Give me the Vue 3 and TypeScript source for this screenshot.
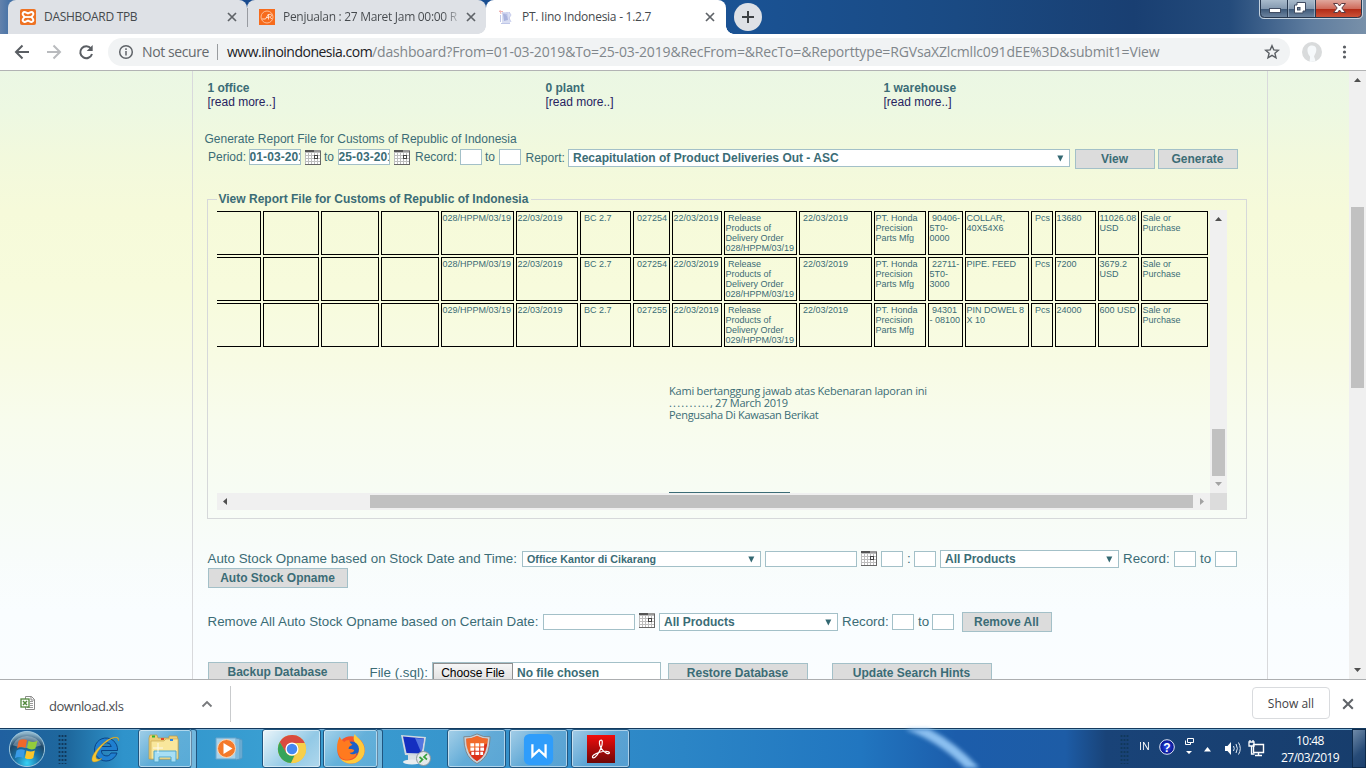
<script setup lang="ts">
interface Office { title: string }
interface ReportRow { no: string; order: string; item: string; goods: string; qty: string; price: string; reg: string }

const offices: Office[] = [{ title: '1 office' }, { title: '0 plant' }, { title: '1 warehouse' }]

const source: ReportRow[] = [
  { no: '028/HPPM/03/19', reg: '027254', order: '028/HPPM/03/19', item: '\u00a090406-\n5T0-\n0000', goods: 'COLLAR,\n40X54X6', qty: '13680', price: '11026.08\nUSD' },
  { no: '028/HPPM/03/19', reg: '027254', order: '028/HPPM/03/19', item: '\u00a022711-\n5T0-\n3000', goods: 'PIPE. FEED', qty: '7200', price: '3679.2\nUSD' },
  { no: '029/HPPM/03/19', reg: '027255', order: '029/HPPM/03/19', item: '\u00a094301\n- 08100', goods: 'PIN DOWEL 8\nX 10', qty: '24000', price: '600 USD' },
]

const cells: string[][] = source.map((r) => [
  '', '', '', '', r.no, '22/03/2019', '\u00a0BC 2.7', '\u00a0' + r.reg, '22/03/2019',
  '\u00a0Release\nProducts of\nDelivery Order\n' + r.order, '\u00a022/03/2019',
  'PT. Honda\nPrecision\nParts Mfg', r.item, r.goods, '\u00a0Pcs', r.qty, r.price, 'Sale or\nPurchase',
])
</script>

<template>
  <div class="screen">
    <svg class="defs" width="0" height="0">
      <symbol id="cal" viewBox="0 0 16 15">
        <rect width="16" height="15" fill="#bdbdbd" />
        <rect width="9" height="2" fill="#555" /><rect x="9" width="7" height="2" fill="#999" />
        <g fill="#fff">
          <template v-for="y in 4" :key="y">
            <rect v-for="x in 5" :key="x" :x="x * 3 - 2" :y="y * 3" width="2" height="2" />
          </template>
        </g>
        <rect x="9.5" y="5.5" width="3" height="3" fill="#fff" stroke="#444" />
        <path d="M15.5 1v14M0 14.5h16" stroke="#666" />
      </symbol>
      <symbol id="close" viewBox="0 0 10 10"><path d="M1 1l8 8M9 1l-8 8" stroke="#5f6368" stroke-width="1.7" /></symbol>
      <symbol id="drop" viewBox="0 0 7 7"><path d="M.3 .5h6L3.300 6.500z" fill="#336872" /></symbol>
    </svg>

    <header class="tabs">
      <div class="tab first">
        <svg class="fav" viewBox="0 0 16 16">
          <rect width="16" height="16" rx="2" fill="#ee7223" />
          <path d="M5.3 3.2C3.2 2.6 2 4.600 3 6l1.500 2L3 10c-1 1.600.400 3.400 2.300 2.800L8 11.500l2.700 1.300c1.900.600 3.300-1.200 2.300-2.800l-1.500-2L13 6c1-1.400-.200-3.400-2.300-2.800L8 4.500z" fill="none" stroke="#fff" stroke-width="2" />
          <path d="M5 8h6" stroke="#fff" stroke-width="1.800" />
        </svg>
        <span class="t1">DASHBOARD TPB</span>
        <svg class="x"><use href="#close" /></svg>
      </div>
      <div class="tab second">
        <svg class="fav" viewBox="0 0 16 16">
          <rect width="16" height="16" fill="#f76b1c" />
          <circle cx="8" cy="8" r="6" fill="none" stroke="#ffd0b0" stroke-width=".8" />
          <path d="M3 10h3.500l3-5v5.500M7 8.500h3M10 5.500c4-1 3 2.500.500 2.500l2.500 2" fill="none" stroke="#ffe2d0" stroke-width=".9" />
        </svg>
        <span class="t2">Penjualan : 27 Maret Jam 00:00 R</span>
        <svg class="x"><use href="#close" /></svg>
      </div>
      <div class="tab active">
        <svg class="fav" viewBox="0 0 16 16">
          <path d="M4 3h8v11H4z" fill="#d9def2" /><path d="M5 5h4l1 6-4 1z" fill="#a9b3dd" />
          <path d="M4 4l4 1M11 3l2 3-2 3 2 4M9 3v4" stroke="#c4caeb" fill="none" /><path d="M1 2.500h4M2 1l1 4" stroke="#eeb5b5" />
          <path d="M3 14.500h9M2.500 6v7" stroke="#bfc7e8" />
        </svg>
        <span class="t3">PT. Iino Indonesia - 1.2.7</span>
        <svg class="x"><use href="#close" /></svg>
      </div>
      <svg class="plus" viewBox="0 0 28 28"><circle cx="14" cy="14" r="14" fill="#dee1e6" /><path d="M14 8v12M8 14h12" stroke="#3c4043" stroke-width="2" /></svg>
      <svg class="winbtns" viewBox="0 0 105 20">
        <defs>
          <linearGradient id="wb" x2="0" y2="1"><stop offset="0" stop-color="#a9bbcc" /><stop offset=".48" stop-color="#8499b0" /><stop offset=".5" stop-color="#3d5878" /><stop offset="1" stop-color="#7289a4" /></linearGradient>
          <linearGradient id="wr" x2="0" y2="1"><stop offset="0" stop-color="#e0a79c" /><stop offset=".48" stop-color="#cf6b5b" /><stop offset=".5" stop-color="#b02a16" /><stop offset="1" stop-color="#d0573c" /></linearGradient>
        </defs>
        <path d="M1 0h102v14q0 4-4 4H5q-4 0-4-4z" fill="url(#wb)" />
        <path d="M56 0h47v14q0 4-4 4H56z" fill="url(#wr)" />
        <path d="M.500 0v14q0 4.500 4.500 4.500h94q4.500 0 4.500-4.500V0M29 0v18M56 0v18" fill="none" stroke="#c4d2df" />
        <path d="M1.500 0v13.500q0 4 4 4h93q4 0 4-4V0M28.500 0v18M56.500 0v18" fill="none" stroke="#27384f" />
        <rect x="10.500" y="8.500" width="11" height="4" fill="#fff" stroke="#414d63" />
        <path d="M38 2.500h8.500v8.500H44V13h-8.500V5H38z" fill="#fff" stroke="#414d63" /><rect x="38.500" y="7.500" width="2.500" height="2.500" fill="#71839a" stroke="#414d63" />
        <path d="M74.500 3.500h4l2 2.500 2-2.500h4l-3.700 4.500 3.700 4.500h-4l-2-2.500-2 2.500h-4l3.700-4.500z" fill="#fff" stroke="#5c3b42" />
      </svg>
    </header>

    <div class="toolbar">
      <svg class="nav" viewBox="0 0 108 36">
        <path d="M29 18H16M22.500 11.500L16 18l6.500 6.500" fill="none" stroke="#5a5e63" stroke-width="2" />
        <path d="M47 18h13M53.500 11.500L60 18l-6.500 6.500" fill="none" stroke="#b9bbbe" stroke-width="2" />
        <path d="M91 14.500A6 6 0 1 0 92 20" fill="none" stroke="#5a5e63" stroke-width="2" /><path d="M92.700 11v6h-6z" fill="#5a5e63" />
      </svg>
      <div class="omnibox">
        <svg class="info" viewBox="0 0 16 16"><circle cx="8" cy="8" r="6.300" fill="none" stroke="#5f6368" stroke-width="1.500" /><path d="M8 7v4.500M8 4.300v1.600" stroke="#5f6368" stroke-width="1.500" /></svg>
        <span class="notsec">Not secure</span>
        <i class="bar"></i>
        <span class="host">www.iinoindonesia.com</span><span class="path">/dashboard?From=01-03-2019&amp;To=25-03-2019&amp;RecFrom=&amp;RecTo=&amp;Reporttype=RGVsaXZlcmllc091dEE%3D&amp;submit1=View</span>
        <svg class="star" viewBox="0 0 16 16"><path d="M8 1.700l1.800 4.200 4.600.400-3.500 3 1.100 4.500L8 11.400l-4 2.400 1.100-4.500-3.500-3 4.600-.400z" fill="none" stroke="#5a5e63" stroke-width="1.400" /></svg>
      </div>
      <svg class="tools" viewBox="0 0 76 36">
        <circle cx="22" cy="18" r="10" fill="#d9dbdc" /><path d="M22 11.500c4 0 5 3 4 6.500-.600 2-1.600 3-2 4.500.400 2 2 3 1 5l-5 .400c-1-2 .500-3 0-5.400-1-1.500-2-2.500-2.400-5C17 14 18.500 11.500 22 11.500z" fill="#f6f9fb" />
        <g fill="#5a5e63"><circle cx="54.500" cy="13" r="1.600" /><circle cx="54.500" cy="18" r="1.600" /><circle cx="54.500" cy="23" r="1.600" /></g>
      </svg>
    </div>

    <main class="viewport">
      <div class="page">
        <section class="panel">
          <div class="offices">
            <div v-for="o in offices" :key="o.title"><b>{{ o.title }}</b><a>[read more..]</a></div>
          </div>
          <div class="caption">Generate Report File for Customs of Republic of Indonesia</div>
          <div class="filters">
            <span>Period:</span><span class="field">01-03-2019</span><svg class="cal"><use href="#cal" /></svg>
            <span>to</span><span class="field">25-03-2019</span><svg class="cal"><use href="#cal" /></svg>
            <span>Record:</span><span class="field"></span><span>to</span><span class="field"></span>
            <span class="low">Report:</span>
            <span class="select">Recapitulation of Product Deliveries Out - ASC<svg><use href="#drop" /></svg></span>
            <span class="btn view">View</span><span class="btn">Generate</span>
          </div>

          <fieldset class="report">
            <legend>View Report File for Customs of Republic of Indonesia</legend>
            <div class="scroller">
              <div class="sheet">
                <div v-for="(row, i) in cells" :key="i" class="row">
                  <div v-for="(c, j) in row" :key="j" class="cell">{{ c }}</div>
                </div>
                <div class="sign">
                  <p class="s1">Kami bertanggung jawab atas Kebenaran laporan ini</p>
                  <p class="s2"><span>..........</span>, 27 March 2019</p>
                  <p class="s3">Pengusaha Di Kawasan Berikat</p>
                  <div class="rule"></div>
                </div>
              </div>
              <div class="vbar">
                <svg viewBox="0 0 7 4"><path d="M0 4h7L3.500 0z" fill="#505050" /></svg>
                <i></i>
                <svg viewBox="0 0 7 4"><path d="M0 0h7L3.500 4z" fill="#a3a3a3" /></svg>
              </div>
              <div class="hbar">
                <svg viewBox="0 0 4 7"><path d="M4 0v7L0 3.500z" fill="#505050" /></svg>
                <i></i>
                <svg viewBox="0 0 4 7"><path d="M0 0v7l4-3.500z" fill="#a3a3a3" /></svg>
              </div>
              <div class="corner"></div>
            </div>
          </fieldset>

          <div class="stock">
            <span>Auto Stock Opname based on Stock Date and Time:</span>
            <span class="select small">Office Kantor di Cikarang<svg><use href="#drop" /></svg></span>
            <span class="field"></span><svg class="cal"><use href="#cal" /></svg><span class="field"></span><span>:</span><span class="field"></span>
            <span class="select">All Products<svg><use href="#drop" /></svg></span>
            <span>Record:</span><span class="field"></span><span>to</span><span class="field"></span>
          </div>
          <span class="btn wide">Auto Stock Opname</span>

          <div class="remove">
            <span>Remove All Auto Stock Opname based on Certain Date:</span>
            <span class="field"></span><svg class="cal"><use href="#cal" /></svg>
            <span class="select">All Products<svg><use href="#drop" /></svg></span>
            <span>Record:</span><span class="field"></span><span>to</span><span class="field"></span>
            <span class="btn">Remove All</span>
          </div>

          <div class="backup">
            <span class="btn b1">Backup Database</span>
            <span class="filelabel">File (.sql):</span>
            <span class="file"><span class="choose">Choose File</span><b>No file chosen</b></span>
            <span class="btn b2">Restore Database</span>
            <span class="btn b3">Update Search Hints</span>
          </div>
        </section>
      </div>
      <div class="pagebar">
        <svg viewBox="0 0 7 4"><path d="M0 4h7L3.500 0z" fill="#505050" /></svg>
        <i></i>
        <svg viewBox="0 0 7 4"><path d="M0 0h7L3.500 4z" fill="#505050" /></svg>
      </div>
    </main>

    <div class="downloads">
      <svg class="xls" viewBox="0 0 16 16">
        <path d="M5.500 1.500h6l3 3v10h-9z" fill="#fff" stroke="#8a8a8a" /><path d="M11 1.500v3.500h3.500" fill="none" stroke="#8a8a8a" />
        <path d="M10 6.500h3M10 8.500h3M10 10.500h3M7 12.500h6" stroke="#9a9a9a" />
        <rect x="1" y="4" width="8" height="8" fill="#fff" stroke="#52883d" stroke-width="1.300" /><path d="M3 6l4 4M7 6l-4 4" stroke="#52883d" stroke-width="1.500" />
      </svg>
      <span class="fname">download.xls</span>
      <svg class="chev" viewBox="0 0 12 8"><path d="M1.500 6.500L6 2l4.500 4.500" fill="none" stroke="#77797c" stroke-width="1.800" /></svg>
      <i class="sep"></i>
      <span class="showall">Show all</span>
      <svg class="x2"><use href="#close" /></svg>
    </div>

    <footer class="taskbar">
      <svg class="streak" viewBox="0 0 200 40" preserveAspectRatio="none"><path d="M48 -4Q86 10 116 44" fill="none" stroke="#8cc0f0" stroke-width="10" /></svg>
      <svg class="orb" viewBox="0 0 40 40">
        <defs><radialGradient id="orbg" cx=".5" cy=".9" r=".85"><stop offset="0" stop-color="#37d2f5" /><stop offset=".4" stop-color="#1b74a8" /><stop offset=".75" stop-color="#1d4768" /><stop offset="1" stop-color="#8fb4c9" /></radialGradient></defs>
        <circle cx="20" cy="20" r="18.500" fill="url(#orbg)" stroke="#a3cbe0" stroke-width="1" />
        <path d="M5 16A16 15 0 0 1 35 16Q20 22 5 16z" fill="#fff" opacity=".3" />
        <g transform="translate(-2 -2) scale(1.100)">
          <path d="M12 12q4-2.500 8-.500l-1.500 7.500q-4-2-8 .500z" fill="#f0682a" /><path d="M21.500 12q4 2.500 8.500 0l-2 7.500q-4 2-8-.500z" fill="#93cc3b" />
          <path d="M10 21.500q4-2.300 8-.300l-1.600 7.300q-4-2-8 .300z" fill="#3a9be6" /><path d="M19.500 21.500q4 2 8 0L26 28.500q-4 2.300-8 0z" fill="#fbc62a" />
        </g>
      </svg>
      <i class="grip"></i>
      <svg class="ie" viewBox="0 0 34 34">
        <path d="M28.500 18.500H12.500a5 5 0 0 0 9.500 2.500h6a11.500 11.500 0 1 1 .5-2.500zM12.600 14.500h9.700a5 5 0 0 0-9.700 0z" fill="#1f7fd0" stroke="#0a4486" stroke-width="1" />
        <path d="M29.500 9c2-6-7-5-14.500 1.500C5.500 18-.5 29 5 30c3 0 5.500-1.500 8-3.500-4 1.500-6.500 1-6-2.500C8 19 15 11.500 20 8.300c5-3.200 9-4 9.500.700z" fill="#f4c533" stroke="#bb8d1e" stroke-width=".4" />
      </svg>
      <div class="task explorer stacked">
        <svg viewBox="0 0 36 34">
          <path d="M2 6l1-3h7l1 3h11V4h8l1 3v20H2z" fill="#edcf78" stroke="#b99a45" stroke-width=".7" /><path d="M4 9h13l2-2h12v20H4z" fill="#f9e79c" stroke="#c9aa55" stroke-width=".7" />
          <rect x="5" y="3.500" width="3" height="2" fill="#2db52d" /><rect x="14" y="6" width="3" height="2" fill="#e44529" /><rect x="23" y="7" width="3" height="2" fill="#2f88e8" />
          <path d="M7 19h22v11h-5v-5H12v5H7z" fill="#a7dff5" stroke="#4fa5cc" />
          <path d="M11 11v10M6 16h10" stroke="#fff" opacity=".8" />
        </svg>
      </div>
      <svg class="media" viewBox="0 0 34 34">
        <path d="M4 6h20v21H4z" fill="#a7d3ec" stroke="#6ba6cc" /><path d="M24 6l4 1v20l-4 1M28 7l2 1v18l-2 1" fill="#7cb9dd" stroke="#5799c2" />
        <circle cx="14.500" cy="16.500" r="9" fill="#f4792a" stroke="#fbd6b5" /><path d="M11.500 11v11l9-5.500z" fill="#fff" />
      </svg>
      <div class="task chrome">
        <svg viewBox="0 0 34 34">
          <circle cx="17" cy="17" r="15" fill="#eac044" /><path d="M4 9.500A15 15 0 0 1 30.500 10.500H17L10 20.500z" fill="#d94b3f" /><path d="M4 9.500L10.500 20.500A7.300 7.300 0 0 0 19.500 24L16 32A15 15 0 0 1 4 9.500z" fill="#35a45a" />
          <path d="M30.500 10.500A15 15 0 0 1 16 32l7.500-12.500a7 7 0 0 0-2-9z" fill="#f7cf4a" /><circle cx="17" cy="17" r="7" fill="#fff" /><circle cx="17" cy="17" r="5.600" fill="#4688f1" />
        </svg>
      </div>
      <div class="task firefox stacked">
        <svg viewBox="0 0 34 34">
          <circle cx="17" cy="18" r="14.500" fill="#f2542d" /><path d="M21 1c2 4 11 8 10.500 18A14.500 14.500 0 0 1 17 32.500c-5 0-9-2-12-6 5 4 13 3.500 17-.5 5-5 3-10 1-13-1.500-3-5-6-2-12z" fill="#ffc93c" />
          <circle cx="17.500" cy="17" r="8" fill="#1c5fc7" /><path d="M5 4c-3 6-3.500 11-2 16C5 29 13 30 18 27c3-1 5-4 5-6-3 2.500-6 2-7.500 0 3 .500 4.500-1.500 5-3-2-1-4-1-6-1 0-3 2-3 4-4.500-2-1.500-3-2.500-3.500-5-3 0-4 1-5 2C8 8 6 7 5 4z" fill="#ff7a1f" />
        </svg>
      </div>
      <svg class="rdp" viewBox="0 0 36 36">
        <path d="M11 24l9-1 2 7-11 2z" fill="#d9e0e5" /><ellipse cx="15" cy="31" rx="9" ry="2.500" fill="#e9edf0" />
        <path d="M4 4l25 2-3 19L8 24z" fill="#cfd8e0" /><path d="M6 5.500l21 2-2.500 15L9.500 22z" fill="#142fc0" /><path d="M18 7l9 1-2.500 14z" fill="#6d94ee" opacity=".7" />
        <circle cx="26.500" cy="27.500" r="7" fill="#e4e9eb" stroke="#8e979c" /><path d="M22.500 26l3 2.500-3 3M30 23l-3 3 3 2.500" fill="none" stroke="#36a23b" stroke-width="1.700" />
      </svg>
      <div class="task shield">
        <svg viewBox="0 0 34 34">
          <path d="M3 4q7 1 14-3 7 4 14 3-.500 10-2.500 16-3 8-11.500 12.500Q8.500 28 5.500 20 3 14 3 4z" fill="#c9cfd4" stroke="#7c858b" /><path d="M5.500 6q6 0 11.500-2.700Q22.500 6 28.500 6 28 14 26 19.500 24 26 17 30 10 26 8 19.500 5.500 14 5.500 6z" fill="#dc3219" />
          <path d="M5.500 6q6 0 11.500-2.700Q22.500 6 28.500 6l-.500 5-20 10Q5.600 14 5.500 6z" fill="#ff8f35" opacity=".6" />
          <g fill="#fff"><path d="M10 11h4v3.300h-4zM15.300 11h4v3.300h-4zM20.500 11h4v3.300h-4zM10 15.500h4v3.300h-4zM15.300 15.500h4v3.300h-4zM20.500 15.500h4v3.300h-4zM11 20h3v3.300h-3zM15.300 20h4v3.300h-4zM20.500 20h3v3.300h-3z" /></g>
        </svg>
      </div>
      <div class="task wps">
        <svg viewBox="0 0 34 34"><rect x="1" y="1" width="31" height="33" rx="6" fill="#2f9dfb" /><path d="M10 12v12.500l7-6.500 7 6.500V12" fill="none" stroke="#fff" stroke-width="2.400" /></svg>
      </div>
      <div class="task acro">
        <svg viewBox="0 0 30 30">
          <defs><linearGradient id="ag" x2="0" y2="1"><stop offset="0" stop-color="#f10c0c" /><stop offset="1" stop-color="#6d0707" /></linearGradient></defs>
          <rect width="30" height="30" fill="url(#ag)" /><path d="M14 6c3-2 3 3 1 8-2 5-6 11-8.500 10.500-2.500-1.500 2-4.500 7-6 5-1.500 10-1.500 10.500.500.200 2.500-6 .200-9-5-1.700-3-2.300-7-1-8z" fill="none" stroke="#fff" stroke-width="1.300" />
        </svg>
      </div>
      <div class="tray">
        <i class="grip"></i>
        <span class="lang">IN</span>
        <svg class="icons" viewBox="0 0 110 40">
          <defs><radialGradient id="hg"><stop offset="0" stop-color="#2b4df0" /><stop offset="1" stop-color="#050f8a" /></radialGradient></defs>
          <circle cx="9" cy="18" r="7.300" fill="url(#hg)" stroke="#dfe6f5" />
          <text x="9" y="22.500" text-anchor="middle" class="q">?</text>
          <path d="M29.500 9.500h6v4h-6zM27.500 11.500v4h5v-2" fill="none" stroke="#fff" /><path d="M28 22h6l-3 3zM46 22.500h7L49.500 18z" fill="#fff" />
          <path d="M67 17h2.500l3.500-4v13l-3.500-4H67z" fill="#fff" /><path d="M75.500 17q1.500 2.500 0 5M78 15q2.700 4.500 0 9M80.500 13.500q3.500 6 0 12" fill="none" stroke="#e4edf7" />
          <path d="M95.500 15.500h10v8h-10zM97 26.500h7M100.500 23.500v3" fill="#233f66" stroke="#fff" stroke-width="1.400" /><path d="M91 13h5v4h-5zM93.500 17v8h3M92 11v2M95 11v2" fill="none" stroke="#fff" stroke-width="1.300" />
        </svg>
        <div class="clock"><span>10:48</span><span>27/03/2019</span></div>
        <i class="desk"></i>
      </div>
    </footer>
  </div>
</template>

<style>
body { margin: 0; overflow: hidden; }
</style>

<style scoped>
* { box-sizing: border-box; }
.screen { width: 1366px; height: 768px; overflow: hidden; display: flex; flex-direction: column; font-family: "Liberation Sans", Arial, sans-serif; font-size: 12px; color: #3b6c76; background: #fff; }
.defs { position: absolute; }
svg { display: block; flex: none; }
i { display: block; flex: none; }

.tabs { height: 34px; flex: none; display: flex; padding-left: 8px; background: linear-gradient(90deg, #6382ac 0, #4672a6 10px, #18498d 200px, #1a5293 55%, #1a4a83 70%, #193f72 83%, #244b7b 90%, #5f7d9f 96%, #7890a9 100%); font-family: "Open Sans", "Noto Sans", sans-serif; color: #45494d; }
.tab { position: relative; height: 34px; display: flex; align-items: center; background: #dee1e6; border-radius: 8px 8px 0 0; padding-left: 12px; white-space: nowrap; }
.first { width: 239px; }
.second { width: 239px; }
.first::after { content: ""; position: absolute; right: -1px; top: 8px; width: 1px; height: 19px; background: #989ba1; z-index: 1; }
.active { width: 240px; background: #fff; }
.active::before, .active::after { content: ""; position: absolute; bottom: 0; width: 8px; height: 8px; }
.active::before { left: -8px; background: radial-gradient(circle at 0 0, #dee1e6 7.5px, #fff 8px); }
.active::after { right: -8px; background: radial-gradient(circle at 100% 0, transparent 7.5px, #fff 8px); }
.fav { width: 16px; height: 16px; margin-right: 8px; }
.tab span { flex: 1; height: 18px; line-height: 18px; overflow: hidden; }
.t1 { letter-spacing: -0.3px; }
.t2 { letter-spacing: -0.3px; background: linear-gradient(90deg, #45494d 160px, #dee1e6 180px); background-clip: text; color: transparent; }
.t3 { letter-spacing: -0.26px; }
.x { width: 10px; height: 10px; margin-right: 10px; margin-left: 6px; }
.active .x { margin-right: 11px; }
.plus { width: 28px; height: 28px; margin: 3px 0 0 8px; }
.winbtns { width: 105px; height: 20px; margin-left: auto; margin-right: 2px; }

.toolbar { height: 37px; flex: none; display: flex; background: #fff; border-bottom: 1px solid #b2b3b4; font-family: "Open Sans", "Noto Sans", sans-serif; font-size: 14px; }
.nav { width: 108px; height: 36px; }
.omnibox { width: 1182px; height: 28px; margin-top: 4px; border-radius: 14px; background: #f1f3f4; display: flex; align-items: center; padding-left: 10px; white-space: nowrap; line-height: 28px; }
.info { width: 16px; height: 16px; }
.notsec { width: 67px; margin-left: 8px; color: #65696d; letter-spacing: -0.4px; }
.bar { width: 1px; height: 16px; margin: 0 9px 0 8px; background: #999c9f; }
.host { width: 145px; color: #202124; letter-spacing: -0.5px; }
.path { width: 788px; color: #80868b; letter-spacing: -0.155px; }
.star { width: 16px; height: 16px; margin-left: auto; margin-right: 10px; }
.tools { width: 76px; height: 36px; }

.viewport { height: 608px; flex: none; display: flex; overflow: hidden; }
.page { width: 1349px; background: linear-gradient(180deg, #ebf7e4 0, #edf8e2 40px, #f2f9dd 85px, #f6fada 140px, #f7fbdc 215px, #f8fbe4 290px, #f8fced 350px, #f7fcf4 420px, #f8fcfa 480px, #f9fdff 540px, #fafdff 608px); }
.panel { width: 1076px; height: 608px; margin-left: 192px; border: solid #d8d9dc; border-width: 0 1px; overflow: hidden; padding: 10px 0 0 15px; }
.offices { display: grid; grid-template-columns: repeat(3, 338px); line-height: 14px; margin-left: -0.5px; }
.offices b, .offices a { display: block; }
.offices a { color: #272361; }
.caption { margin: 23px 0 0 -3.5px; line-height: 14px; height: 17px; }
.filters, .stock, .remove { display: grid; align-items: start; white-space: nowrap; line-height: 16px; }
.filters { height: 20px; grid-template-columns: 41px 56px 19px 14px 56px 21px 45px 25px 14px 27px 42px 507px 83px 80px; }
.field { height: 16px; border: 1px solid #a3c0c8; background: #fff; font-weight: bold; line-height: 14px; overflow: hidden; }
.filters .field { width: 52px; text-indent: -0.5px; letter-spacing: 0.1px; }
.filters .field:empty { width: 22px; }
.cal { width: 16px; height: 15px; margin-top: 1px; }
.low { line-height: 18px; text-indent: -0.5px; }
.select { position: relative; height: 18px; border: 1px solid #a3c0c8; background: #fff; font-size: 12px; font-weight: bold; line-height: 17px; padding-left: 4px; }
.select svg { position: absolute; right: 5px; top: 5px; width: 7px; height: 7px; }
.filters .select { width: 502px; }
.btn { height: 20px; border: 1px solid #a3c0c8; background: #dcdcdc; font-size: 12px; font-weight: bold; line-height: 18px; text-align: center; display: block; white-space: nowrap; padding-right: 1px; }
.view { width: 80px; }

.report { position: relative; margin: 22px 0 0 -1px; padding: 0; width: 1040px; height: 328px; border: 1px solid #d6d8da; min-width: 0; font-size: 12px; }
.report legend { margin-left: 9px; padding: 0 2.5px 0 1.5px; height: 16px; line-height: 16px; font-weight: bold; }
.scroller { margin: 3px 0 0 9px; width: 1010px; height: 300px; display: grid; grid-template: 283px 17px / 993px 17px; }
.sheet { overflow: hidden; padding-top: 1px; }
.row { display: grid; gap: 2px; margin-bottom: 2px; height: 44px; grid-template-columns: 44px 56px 58px 58px 73px 62px 51px 37px 50px 73px 73px 52px 35px 64px 22px 41px 41px 67px; }
.cell { border: 1px solid #000; padding: 1px 0 0 0.4px; font-size: 9px; line-height: 10px; white-space: pre; overflow: hidden; }
.cell:first-child { border-left: 0; }
.sign { margin: 38px 0 0 452px; font-family: "Open Sans", "Noto Sans", sans-serif; font-size: 11px; line-height: 12px; }
.sign p { margin: 0; white-space: nowrap; }
.s1 { letter-spacing: -0.21px; }
.s2 { letter-spacing: -0.25px; }
.s2 span { letter-spacing: 1.2px; }
.s3 { letter-spacing: -0.3px; }
.rule { width: 121px; height: 1px; margin-top: 71px; background: #3b6c76; }
.vbar, .pagebar { width: 17px; background: #f0f0f0; display: flex; flex-direction: column; align-items: center; padding: 7px 0; }
.vbar svg, .pagebar svg { width: 7px; height: 4px; }
.vbar i { width: 13px; height: 47px; margin: auto 0 6px; background: #c1c1c1; }
.hbar { height: 17px; background: #f0f0f0; display: flex; align-items: center; padding: 0 6px; }
.hbar svg { width: 4px; height: 7px; }
.hbar i { width: 823px; height: 13px; margin: 0 7px 0 auto; background: #c1c1c1; }
.corner { background: #dcdcdc; }

.stock { margin-top: 31px; height: 18px; font-size: 13.333px; line-height: 16px; grid-template-columns: 314px 243px 96px 20px 26px 7px 26px 183px 51px 26px 15px 22px; }
.stock > span:first-child, .remove > span:first-child { text-indent: -0.5px; letter-spacing: 0.01px; }
.stock > *, .remove > * { margin-top: 1px; }
.stock .select, .remove .select { margin-top: 0; width: 179px; }
.stock .select.small { margin-top: 1px; width: 239px; height: 16px; line-height: 15px; font-size: 10.667px; letter-spacing: 0.02px; }
.small svg { top: 4px; }
.field:nth-child(3), .remove .field:nth-child(2) { width: 92px; }
.stock .field:nth-child(n+4), .remove .field:nth-child(n+4) { width: 22px; }
.wide { width: 140px; }
.remove { margin-top: 24px; height: 20px; font-size: 13.333px; line-height: 18px; grid-template-columns: 335px 96px 20px 183px 50px 26px 14px 30px 90px; }
.remove .field { margin-top: 2px; }
.remove .select { margin-top: 1px; }
.remove .btn { margin-top: 0; }
.backup { margin-top: 30px; display: flex; align-items: flex-start; white-space: nowrap; }
.b1 { width: 140px; }
.filelabel { width: 62.5px; margin-left: 21.5px; font-size: 13.333px; line-height: 21px; }
.file { width: 229px; height: 22px; border: 1px solid #a3c0c8; background: #fff; display: flex; line-height: 20px; margin-right: 7px; }
.choose { width: 80px; height: 20px; border: 1px solid #8f8f8f; background: linear-gradient(#f6f6f6, #dedede); color: #000; text-align: center; margin-right: 4px; line-height: 19px; letter-spacing: -0.05px; }
.b2 { width: 140px; margin-top: 1px; }
.b3 { width: 160px; margin: 1px 0 0 24px; }
.pagebar i { width: 13px; height: 181px; margin: 125px 0 auto; background: #c1c1c1; }

.downloads { height: 49px; flex: none; border-top: 1px solid #acaeb0; background: #fff; display: flex; align-items: flex-start; font-family: "Open Sans", "Noto Sans", sans-serif; white-space: nowrap; }
.xls { width: 16px; height: 16px; margin: 15px 0 0 20px; }
.fname { width: 153px; margin: 16px 0 0 13px; font-size: 13px; line-height: 20px; letter-spacing: -0.45px; color: #4a4d51; }
.chev { width: 12px; height: 8px; margin-top: 20px; margin-left: -1px; }
.sep { width: 1px; height: 36px; margin: 6px 0 0 17px; background: #c9cbcd; }
.showall { width: 78px; height: 32px; margin: 7px 0 0 auto; border: 1px solid #d9dbde; border-radius: 4px; text-align: center; line-height: 31px; font-size: 12px; color: #3f4246; font-weight: 500; }
.x2 { width: 12px; height: 12px; margin: 18px 12px 0; }

.taskbar { position: relative; height: 40px; flex: none; display: flex; align-items: center; background: linear-gradient(90deg, #2060a0 0, #1e689d 5%, #2f93cb 9%, #3a9fd2 20%, #3794cc 35%, #2b85c6 50%, #2176c0 63%, #1c5dab 70%, #1d5ca6 78%, #194378 81%, #173d6c 100%); border-top: 1px solid #143a5e; box-shadow: inset 0 1px #79afd5; }
.streak { position: absolute; left: 860px; top: 0; width: 200px; height: 39px; filter: blur(2px); }
.orb { width: 38px; height: 38px; margin-left: 8px; }
.grip { width: 9px; height: 30px; margin: 0 22px 0 12px; background: radial-gradient(circle, #10385c 1px, transparent 1.2px) 0 0 / 3px 4px; }
.ie { width: 34px; height: 34px; margin-right: 15px; }
.task { position: relative; height: 39px; display: flex; align-items: center; justify-content: center; border: 1px solid #20557f; border-radius: 3px; background: linear-gradient(135deg, rgba(255,255,255,.55), rgba(255,255,255,.22) 50%, rgba(255,255,255,.18)); box-shadow: inset 0 0 0 1px rgba(255,255,255,.5); }
.task svg { width: 32px; height: 32px; }
.stacked::after { content: ""; position: absolute; right: -6px; top: -1px; width: 5px; height: 39px; border: solid #20557f; border-width: 1px 1px 1px 0; border-radius: 0 3px 3px 0; background: rgba(255,255,255,.3); }
.explorer { width: 54px; }
.explorer svg { width: 36px; height: 34px; }
.media { width: 34px; height: 34px; margin: 0 16px 0 20px; }
.chrome { width: 59px; background: linear-gradient(135deg, rgba(255,255,255,.9), rgba(255,255,255,.45) 60%, rgba(255,255,255,.6)); margin-right: 2px; }
.firefox { width: 55px; }
.rdp { width: 36px; height: 36px; margin: 0 14px 0 19px; }
.shield { width: 59px; margin-right: 3px; }
.wps { width: 59px; margin-right: 3px; }
.acro { width: 59px; }
.acro svg { width: 28px; height: 28px; }
.tray { margin-left: auto; height: 39px; display: flex; align-items: center; color: #fff; font-family: "Open Sans", "Noto Sans", sans-serif; position: relative; }
.tray .grip { margin: 0 10px 0 0; }
.lang { width: 19px; font-size: 11.5px; height: 24px; line-height: 18px; transform: scaleX(.9); transform-origin: left; }
.icons { width: 110px; height: 40px; }
.q { font: bold 12px "Liberation Sans", sans-serif; fill: #fff; }
.clock { width: 70px; margin-right: 7px; margin-left: 7px; font-size: 12px; line-height: 17px; display: flex; flex-direction: column; align-items: center; letter-spacing: -0.55px; }
.desk { width: 14px; height: 39px; border: 1px solid #0e2b4c; background: linear-gradient(135deg, #6f8aa8, #274b77 60%, #1b3f6d); }
</style>
